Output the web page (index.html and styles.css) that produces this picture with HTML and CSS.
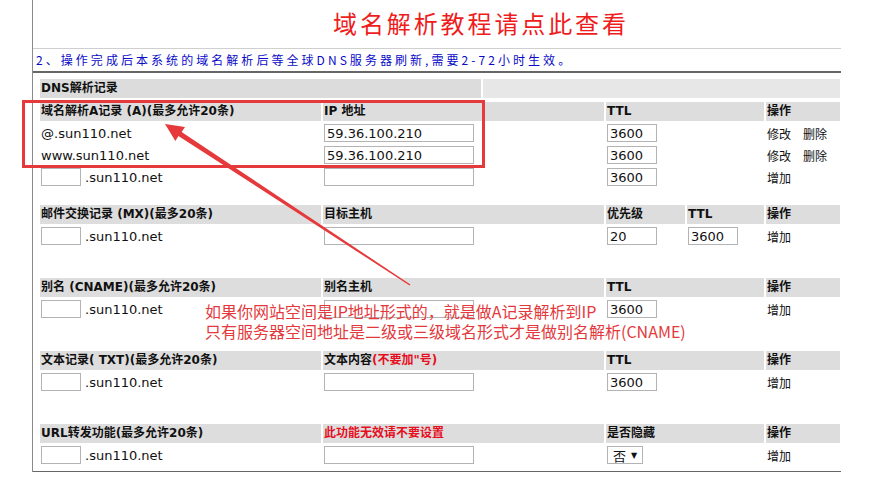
FILE: index.html
```html
<!DOCTYPE html>
<html lang="zh-CN">
<head>
<meta charset="utf-8">
<title>DNS解析记录</title>
<link rel="stylesheet" href="styles.css">
</head>
<body>
<div class="page">
  <div class="title-bar"><a class="title" href="#">域名解析教程请点此查看</a></div>
  <div class="notice">2、操作完成后本系统的域名解析后等全球DNS服务器刷新,需要2-72小时生效。</div>
  <div class="content">
    <div class="dns-head"><div class="cell">DNS解析记录</div><div class="cell light"></div></div>

    <div class="sec sec-a grid4">
      <div class="th">域名解析A记录 (A)(最多允许20条)</div><div class="th">IP 地址</div><div class="th">TTL</div><div class="th">操作</div>
      <div class="td">@.sun110.net</div><div class="td"><input class="ip" type="text" value="59.36.100.210"></div><div class="td"><input class="ttl" type="text" value="3600"></div><div class="td ops"><span class="op">修改</span><span class="op">删除</span></div>
      <div class="td">www.sun110.net</div><div class="td"><input class="ip" type="text" value="59.36.100.210"></div><div class="td"><input class="ttl" type="text" value="3600"></div><div class="td ops"><span class="op">修改</span><span class="op">删除</span></div>
      <div class="td"><input class="host" type="text" value=""><span class="suffix">.sun110.net</span></div><div class="td"><input class="ip" type="text" value=""></div><div class="td"><input class="ttl" type="text" value="3600"></div><div class="td ops"><span class="op">增加</span></div>
    </div>

    <div class="sec sec-mx grid5">
      <div class="th">邮件交换记录 (MX)(最多20条)</div><div class="th">目标主机</div><div class="th">优先级</div><div class="th">TTL</div><div class="th">操作</div>
      <div class="td"><input class="host" type="text" value=""><span class="suffix">.sun110.net</span></div><div class="td"><input class="ip" type="text" value=""></div><div class="td"><input class="ttl" type="text" value="20"></div><div class="td"><input class="ttl" type="text" value="3600"></div><div class="td ops"><span class="op">增加</span></div>
    </div>

    <div class="sec sec-next grid4">
      <div class="th">别名 (CNAME)(最多允许20条)</div><div class="th">别名主机</div><div class="th">TTL</div><div class="th">操作</div>
      <div class="td"><input class="host" type="text" value=""><span class="suffix">.sun110.net</span></div><div class="td"><input class="ip" type="text" value=""></div><div class="td"><input class="ttl" type="text" value="3600"></div><div class="td ops"><span class="op">增加</span></div>
    </div>

    <div class="sec sec-next grid4">
      <div class="th">文本记录( TXT)(最多允许20条)</div><div class="th">文本内容<span class="warn">(不要加"号)</span></div><div class="th">TTL</div><div class="th">操作</div>
      <div class="td"><input class="host" type="text" value=""><span class="suffix">.sun110.net</span></div><div class="td"><input class="ip" type="text" value=""></div><div class="td"><input class="ttl" type="text" value="3600"></div><div class="td ops"><span class="op">增加</span></div>
    </div>

    <div class="sec sec-next grid4">
      <div class="th">URL转发功能(最多允许20条)</div><div class="th"><span class="warn">此功能无效请不要设置</span></div><div class="th">是否隐藏</div><div class="th">操作</div>
      <div class="td"><input class="host" type="text" value=""><span class="suffix">.sun110.net</span></div><div class="td"><input class="ip" type="text" value=""></div><div class="td"><span class="select">否<span class="caret">▼</span></span></div><div class="td ops"><span class="op">增加</span></div>
    </div>
  </div>

  <div class="red-box"></div>
  <svg class="arrow" width="887" height="494" viewBox="0 0 887 494" xmlns="http://www.w3.org/2000/svg">
    <polygon points="165,124 185,127 181.6,131.9 410.4,284.5 409.6,285.5 178.4,135.9 175.4,141" fill="#e5393b"/>
  </svg>
  <div class="note">如果你网站空间是IP地址形式的，就是做A记录解析到IP<br>只有服务器空间地址是二级或三级域名形式才是做别名解析(CNAME)</div>
</div>
</body>
</html>
```

FILE: styles.css
```css
html, body {
  margin: 0;
  padding: 0;
  background: #ffffff;
}

body {
  position: relative;
  width: 887px;
  height: 494px;
  overflow: hidden;
  font-family: "DejaVu Sans", "Noto Sans CJK SC", sans-serif;
  color: #111111;
}

.page {
  margin-left: 32px;
  width: 808px;
  border-left: 1px solid #8a8a8a;
}

.title-bar {
  height: 49px;
  border-bottom: 1px solid #cfcfcf;
  padding-left: 300px;
  box-sizing: border-box;
  padding-top: 8px;
}

.title {
  font-family: "Noto Sans CJK SC", sans-serif;
  font-size: 24px;
  line-height: 30px;
  letter-spacing: 2.9px;
  color: #ee1c1c;
  text-decoration: none;
}

.notice {
  height: 22px;
  line-height: 22px;
  padding-left: 3px;
  font-family: "Noto Sans CJK SC", sans-serif;
  font-size: 12px;
  letter-spacing: 3.05px;
  color: #0a0ac8;
  border-bottom: 2px solid #666666;
  white-space: nowrap;
}

.content {
  padding: 6px 0 6px 7px;
  border-bottom: 1px solid #666666;
}

.dns-head {
  display: grid;
  grid-template-columns: 441px 357px;
  column-gap: 2px;
}

.dns-head .cell {
  height: 19px;
  line-height: 19px;
  background: #dcdcdc;
  font-size: 12px;
  font-weight: bold;
  padding-left: 1px;
}

.dns-head .light {
  background: #e7e7e7;
}

.sec {
  display: grid;
  column-gap: 2px;
  row-gap: 2px;
  width: 800px;
}

.grid4 {
  grid-template-columns: 281px 281px 158px 74px;
}

.grid5 {
  grid-template-columns: 281px 281px 79px 77px 74px;
}

.sec-a { margin-top: 4px; }
.sec-mx { margin-top: 18px; }
.sec-next { margin-top: 32px; }

.th {
  height: 19px;
  line-height: 19px;
  background: #dddddd;
  font-size: 12px;
  font-weight: bold;
  padding-left: 1px;
  white-space: nowrap;
  overflow: hidden;
}

.warn {
  color: #e60f1e;
}

.td {
  height: 20px;
  display: flex;
  align-items: center;
  padding-left: 1px;
  font-size: 13px;
  white-space: nowrap;
}

input {
  box-sizing: border-box;
  height: 18px;
  margin: 0;
  padding: 0 2px;
  border: 1px solid #b3b3b3;
  font-family: "DejaVu Sans", sans-serif;
  font-size: 13px;
  color: #111111;
  background: #ffffff;
  outline: none;
}

.host { width: 40px; }
.ip { width: 150px; }
.ttl { width: 50px; }

.suffix {
  margin-left: 4px;
}

.ops {
  font-size: 12px;
}

.op {
  margin-right: 12px;
}

.select {
  box-sizing: border-box;
  display: inline-flex;
  align-items: center;
  height: 18px;
  width: 36px;
  border: 1px solid #b3b3b3;
  padding-left: 5px;
  font-size: 13px;
}

.caret {
  font-size: 8px;
  margin-left: 5px;
}

.red-box {
  position: absolute;
  left: 22px;
  top: 100px;
  width: 463px;
  height: 68px;
  box-sizing: border-box;
  border: 3px solid #e5393b;
}

.arrow {
  position: absolute;
  left: 0;
  top: 0;
  pointer-events: none;
}

.note {
  position: absolute;
  left: 205px;
  top: 301px;
  font-family: "Noto Sans CJK SC", sans-serif;
  font-size: 16px;
  line-height: 20px;
  color: #e4393c;
  white-space: nowrap;
}
```
